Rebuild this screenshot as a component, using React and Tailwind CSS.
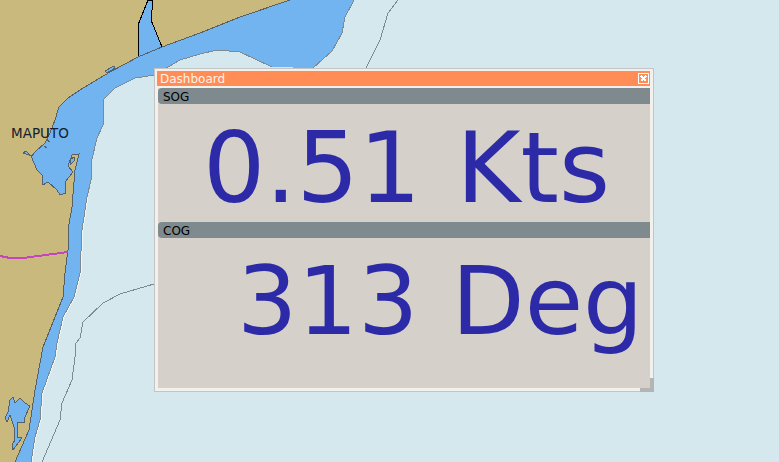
const LAND = '#c9b97c';
const WATER = '#72b4f0';
const SEA = '#d5e8ee';
const COAST = '#55606a';
const CONTOUR = '#7d8a93';

const shore = '290,0 240,17 200,33 162,47 138,57 110,72 80,90 68,98 59,107 55,120 50,133 45,143 35,152 32,156 23,153 26,151 31,156 37,170 42,175 43,185 48,182 57,190 60,195 66,193 65,182 73,172 68,166 72,155 79,154 75,170 72,207 68,230 68,250 65,273 63,297 43,347 35,390 29,430 15,462';
const lakePts = '13,397 15,403 20,398 25,403 30,406 25,417 24,423 18,422 17,430 17,437 22,438 13,450 12,445 15,440 14,427 10,415 7,422 5,418 8,412 10,400';

function ChartMap() {
  return (
    <svg className="block w-full h-full" viewBox="0 0 779 462" shapeRendering="crispEdges">
      <rect width="779" height="462" fill={SEA} />
      <polygon points={`0,0 ${shore} 0,462`} fill={LAND} />
      <polygon points={`${shore} 31,462 35,437 40,420 42,393 55,357 57,343 63,317 74,297 80,273 82,230 87,197 91,180 91,163 97,138 103,125 103,100 115,88 135,78 155,75 180,60 200,54 217,50 240,52 272,67 313,68 332,51 342,33 345,17 354,0`} fill={WATER} />
      <polyline points="138,57 138,25 148,0 153,0 151,20 162,47 138,57" fill={WATER} stroke="#000" />
      <polyline points="105,71 114,66 115,68 107,73 105,71" fill={WATER} stroke={COAST} />
      <polyline points={shore} fill="none" stroke={COAST} />
      <polyline points="32,462 36,437 41,420 43,393 56,357 58,343 64,317 75,297 81,273 83,230 88,197" fill="none" stroke="#eef6f8" />
      <polyline points="31,462 35,437 40,420 42,393 55,357 57,343 63,317 74,297 80,273 82,230 87,197 91,180 91,163 97,138 103,125 103,100 115,88 135,78 155,75 180,60 200,54 217,50 240,52 272,67" fill="none" stroke={CONTOUR} />
      <polyline points="313,68 332,51 342,33 345,17 354,0" fill="none" stroke={CONTOUR} />
      <polyline points="398,0 388,13 380,40 366,68" fill="none" stroke={CONTOUR} />
      <polyline points="154,284 120,294 103,303 83,322 80,338 76,343 75,357 72,380 62,403 60,420 42,462" fill="none" stroke={CONTOUR} />
      <polygon points={lakePts} fill={WATER} stroke={COAST} />
      <polyline points="47,128 47,140 50,142" fill="none" stroke={COAST} />
      <polyline points="44,146 47,148" fill="none" stroke={COAST} />
      <polygon points="70,160 74,157 75,160 70,165" fill={WATER} stroke={COAST} />
      <polyline points="0,256 10,258 23,258 68,252" fill="none" stroke="#c843c0" strokeWidth="2" />
    </svg>
  );
}

function CloseBox() {
  return (
    <svg width="11" height="11" viewBox="0 0 11 11" shapeRendering="crispEdges">
      <rect x="0.5" y="0.5" width="10" height="10" fill="none" stroke="#fff" />
      <path d="M3 3L8 8M8 3L3 8" stroke="#fff" strokeWidth="2.5" />
    </svg>
  );
}

function Instrument({ label, children }) {
  return (
    <div>
      <div className="h-4 bg-[#7f8a8f] rounded-l-[4px] pl-[5px] text-[12px] leading-[18px] text-black">{label}</div>
      {children}
    </div>
  );
}

export default function App() {
  return (
    <div className="relative w-[779px] h-[462px] overflow-hidden font-['DejaVu_Sans',sans-serif]">
      <ChartMap />
      <div className="absolute left-[11px] top-[125px] text-[13.5px] leading-4 text-[#14202e]">MAPUTO</div>

      {/* dashboard window */}
      <div className="absolute left-[154px] top-[68px] w-[500px] h-[324px] border border-[#c4c4c4] bg-[#f3f1ee] p-[2px] pr-[3px]">
        <div className="h-[15px] bg-[#ff8d55] flex items-center justify-between pl-[3px] pr-[1px] text-[12px] text-[#fdf3ea]">
          <span>Dashboard</span>
          <CloseBox />
        </div>
        <div className="mt-[2px] ml-[1px] h-[300px] bg-[#d5d0ca]">
          <Instrument label="SOG">
            <div className="h-[118px] pl-[45px] pt-[15px] whitespace-nowrap text-[98px] leading-none [word-spacing:4px] text-[#2d2aa8]">0.51 Kts</div>
          </Instrument>
          <Instrument label="COG">
            <div className="h-[120px] pl-[79px] pt-[16px] whitespace-nowrap text-[95px] leading-none [word-spacing:3px] text-[#2d2aa8]">313 Deg</div>
          </Instrument>
        </div>
        <div className="absolute right-[-1px] bottom-[-1px] w-[14px] h-1 bg-[#b4b4b4]" />
        <div className="absolute right-[-1px] bottom-[-1px] w-1 h-[14px] bg-[#b4b4b4]" />
      </div>
    </div>
  );
}
